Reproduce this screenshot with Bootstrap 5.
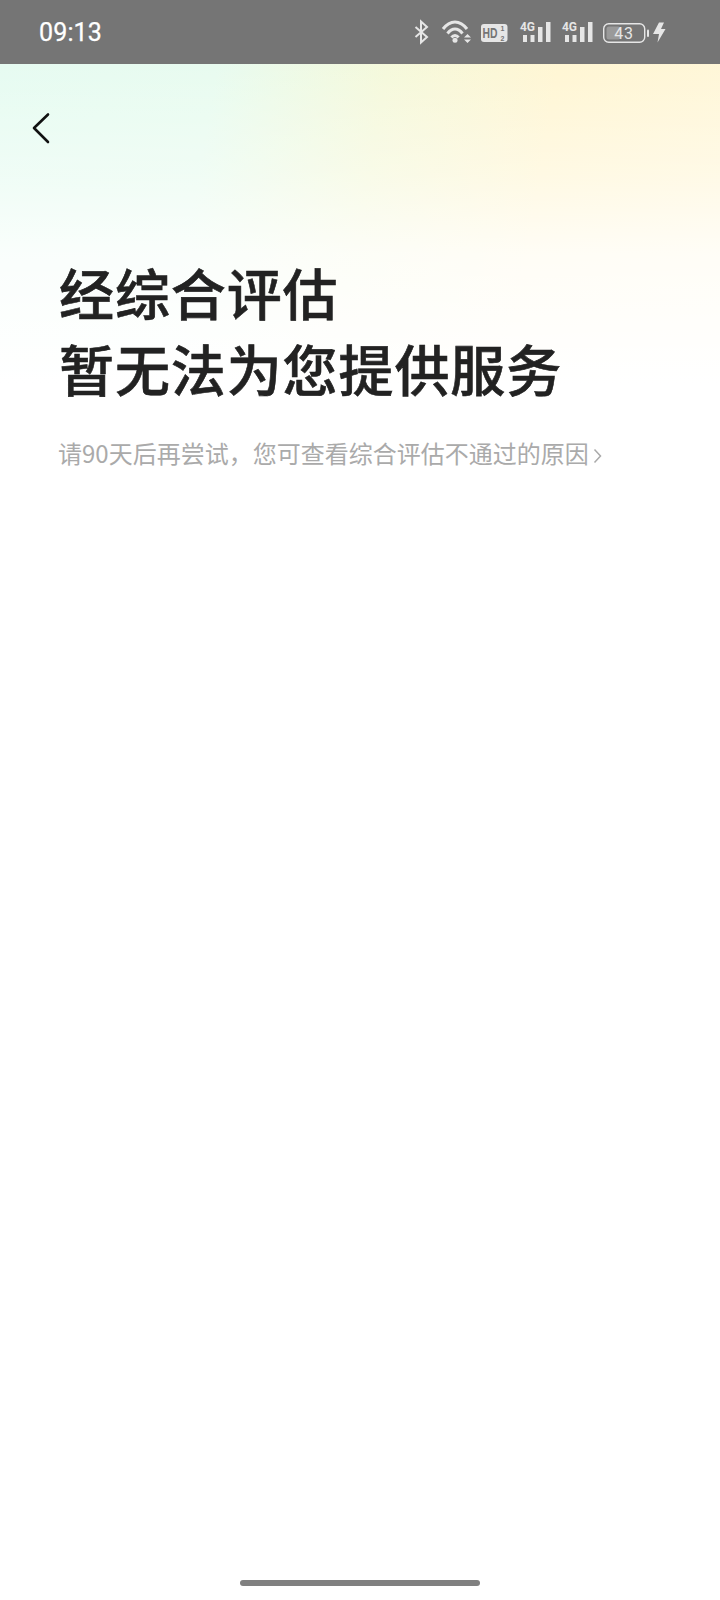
<!DOCTYPE html>
<html lang="zh">
<head>
<meta charset="utf-8">
<link href="https://cdn.jsdelivr.net/npm/bootstrap@5.3.0/dist/css/bootstrap.min.css" rel="stylesheet">
<style>
html,body{height:100%}
body{background:#fff;font-family:"Noto Sans CJK SC",sans-serif}
.screen{height:1600px;width:720px;overflow:hidden;
 background:linear-gradient(to bottom,rgba(255,255,255,.08) 0,rgba(255,255,255,.42) 110px,rgba(255,255,255,.8) 190px,#fff 320px) 0 64px/100% 320px no-repeat,
 linear-gradient(100deg,#e4fbf0 0,#e6fbee 28%,#f4f8d8 50%,#fff5d0 72%,#fff6d6 100%) 0 64px/100% 320px no-repeat,#fff}
.statusbar{height:64px;background:#757575;padding:0 40px 0 39px}
.clock{font:400 25px/1 Roboto,sans-serif;letter-spacing:.15px;color:#fff;padding-top:1px;-webkit-text-stroke:.25px #fff}
.statusbar svg{display:block}
.backbtn{padding:48px 0 0 31px;height:190px}
.backbtn svg{display:block}
.msg{padding-left:59px}
.msg-title{font:500 55px/75.5px "Noto Sans CJK SC",sans-serif;color:#222;margin:0;letter-spacing:.9px;-webkit-text-stroke:.6px #222}
.msg-sub{font:400 24px/34px "Noto Sans CJK SC",sans-serif;color:#aaa;margin:31px 0 0;margin-left:-1px}
.msg-sub svg{vertical-align:-1px;margin-left:4px}
.homebar{width:240px;height:6px;border-radius:3px;background:#808080;margin:0 auto 14px}
</style>
</head>
<body>
<div class="screen d-flex flex-column">
  <div class="statusbar d-flex align-items-center justify-content-between flex-shrink-0">
    <span class="clock">09:13</span>
    <svg width="272" height="64" viewBox="408 0 272 64" fill="none">
      <!-- bluetooth -->
      <path d="M415.500 27L427 37l-6 5.500V21.500L427 27l-11.500 10" stroke="#e6e6e6" stroke-width="2"/>
      <!-- wifi -->
      <path d="M443 29c7-9.500 17-9.500 24 0M447.500 33.500c4.500-6 10.500-6 15 0M451.500 37.500c2-2.600 5-2.600 7 0" stroke="#e6e6e6" stroke-width="3"/>
      <circle cx="455" cy="40.300" r="2.500" fill="#e6e6e6"/>
      <path d="M464 37.500l3.500-3.500 3.500 3.500zM464 39.500l3.500 3.500 3.500-3.500z" fill="#e6e6e6"/>
      <!-- HD -->
      <rect x="481" y="24" width="26.500" height="18" rx="3" fill="#e6e6e6"/>
      <text x="482.500" y="38" font-family="Liberation Sans" font-weight="700" font-size="14" textLength="15" lengthAdjust="spacingAndGlyphs" fill="#757575">HD</text>
      <text x="500.500" y="31" font-family="Liberation Sans" font-weight="700" font-size="7" fill="#757575">1</text>
      <text x="500.500" y="40.500" font-family="Liberation Sans" font-weight="700" font-size="7" fill="#757575">2</text>
      <!-- sim 1 -->
      <text x="520" y="31" font-family="Roboto" font-weight="700" font-size="12" textLength="15" fill="#e6e6e6">4G</text>
      <path d="M523 35h4v7h-4zM530.500 35h4v7h-4zM538 27h4.500v15H538zM546 22h4.500v20H546z" fill="#e6e6e6"/>
      <!-- sim 2 -->
      <text x="562" y="31" font-family="Roboto" font-weight="700" font-size="12" textLength="15" fill="#e6e6e6">4G</text>
      <path d="M565 35h4v7h-4zM572.500 35h4v7h-4zM580 27h4.500v15H580zM588 22h4.500v20H588z" fill="#e6e6e6"/>
      <!-- battery -->
      <rect x="603.700" y="23.700" width="41" height="18.600" rx="5" stroke="#e6e6e6" stroke-width="1.400"/>
      <rect x="606.500" y="26.500" width="14" height="13" rx="2.500" fill="#9a9a9a"/>
      <text x="624" y="38.500" text-anchor="middle" font-family="Roboto" font-size="16" fill="#e6e6e6" letter-spacing=".8">43</text>
      <rect x="647" y="29.500" width="2" height="7.500" rx="1" fill="#e6e6e6"/>
      <path d="M659 22.500h5l-3 6.500h4.500L657.500 42.500l1.500-8.500h-6z" fill="#e6e6e6"/>
    </svg>
  </div>
  <div class="backbtn flex-shrink-0">
    <svg width="20" height="32" viewBox="0 0 20 32" fill="none"><path d="M17 2.500L3 16l14 14" stroke="#111" stroke-width="2.600" stroke-linecap="round" stroke-linejoin="round"/></svg>
  </div>
  <div class="msg">
    <h1 class="msg-title">经综合评估<br>暂无法为您提供服务</h1>
    <p class="msg-sub">请90天后再尝试，您可查看综合评估不通过的原因<svg width="9" height="16" viewBox="0 0 9 16" fill="none"><path d="M1.500 1.500L7.500 8l-6 6.500" stroke="#aaa" stroke-width="1.500"/></svg></p>
  </div>
  <div class="flex-grow-1"></div>
  <div class="homebar flex-shrink-0"></div>
</div>
<script src="https://cdn.jsdelivr.net/npm/bootstrap@5.3.0/dist/js/bootstrap.bundle.min.js"></script>
</body>
</html>
